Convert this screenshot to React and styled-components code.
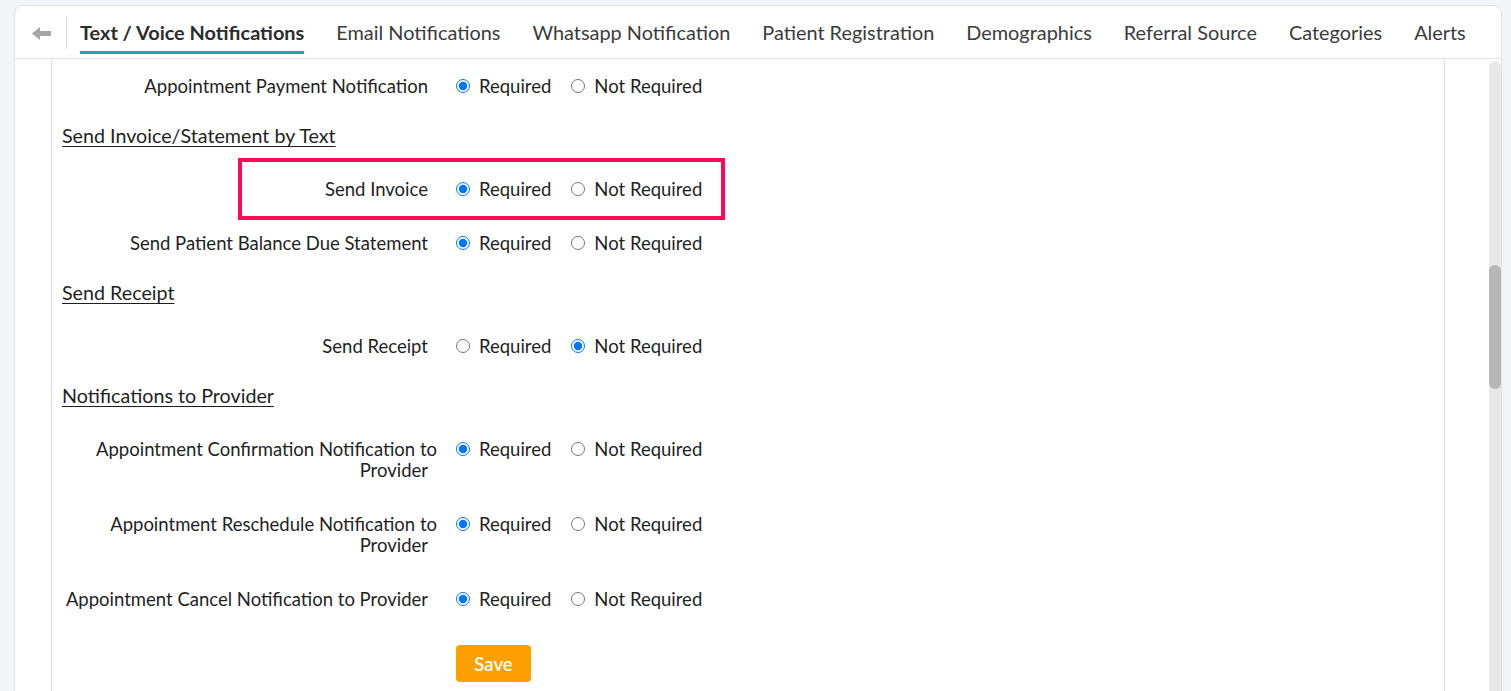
import React from "react";
import styled, { createGlobalStyle } from "styled-components";

const GlobalStyle = createGlobalStyle`
	html, body {
		margin: 0;
		height: 691px;
		overflow: hidden;
		background: #f3f4f8;
		font-family: Lato, "Open Sans", sans-serif;
	}
`;

const Page = styled.div`
		padding: 5px 9px 0 14px;
		height: 691px;
		box-sizing: border-box;
	`,
	Card = styled.div`
		background: #ffffff;
		border: 1px solid #e1e2e5;
		border-bottom: none;
		border-radius: 8px 8px 0 0;
		height: 100%;
		display: flex;
		flex-direction: column;
	`,
	TabBar = styled.div`
		display: flex;
		align-items: center;
		height: 52px;
		border-bottom: 1px solid #e3e4e7;
		flex-shrink: 0;
	`,
	BackBox = styled.div`
		display: flex;
		align-items: center;
		height: 32px;
		padding: 0 15px 0 17px;
		border-right: 1px solid #dcdcdc;
		margin-top: 2px;
	`,
	Tabs = styled.div`
		display: flex;
		align-self: flex-start;
		gap: 32px;
		margin-left: 13px;
	`,
	Tab = styled.div`
		display: flex;
		align-items: center;
		box-sizing: border-box;
		height: 48px;
		padding-top: 7px;
		border-bottom: 3px solid ${(p) => (p.$active ? "#1fa9a6" : "transparent")};
		font-size: 19.9px;
		font-weight: ${(p) => (p.$active ? 700 : 400)};
		color: ${(p) => (p.$active ? "#2c2c2c" : "#3b3b3b")};
		white-space: nowrap;
		cursor: pointer;
	`,
	Body = styled.div`
		flex: 1;
		display: flex;
		min-height: 0;
	`,
	Main = styled.div`
		flex: 1;
		display: flex;
		padding: 0 44px 0 36px;
	`,
	Panel = styled.div`
		flex: 1;
		border-left: 1px solid #dedfe2;
		border-right: 1px solid #dedfe2;
	`,
	Scrollbar = styled.div`
		width: 12px;
		margin-top: 2px;
		background: #e8e8e8;
		border-radius: 6px 6px 0 0;
	`,
	Thumb = styled.div`
		height: 124px;
		margin-top: ${(p) => p.$offset}px;
		background: #b6b6b6;
		border-radius: 6px;
	`,
	SectionTitle = styled.div`
		padding: 12px 0 16px 10px;
		font-size: 19.7px;
		line-height: 21px;
		color: #1f1f1f;
		text-decoration: underline;
		text-decoration-thickness: 1px;
		text-underline-offset: 3px;
	`,
	Row = styled.div`
		position: relative;
		display: flex;
		align-items: flex-start;
		padding: 17px 0 16px;
		font-size: 18.5px;
		line-height: 21px;
		color: #1f1f1f;

		${(p) =>
			p.$marked &&
			`
			&::after {
				content: "";
				position: absolute;
				top: -4px;
				bottom: -4px;
				left: 186px;
				width: 487px;
				box-sizing: border-box;
				border: 4px solid #ff0a54;
				pointer-events: none;
			}
		`}
	`,
	Label = styled.div`
		width: 385px;
		flex-shrink: 0;
		text-align: right;

		span {
			padding-right: 9px;
		}
	`,
	Options = styled.div`
		display: flex;
		gap: 20px;
		margin-left: 19px;
	`,
	Option = styled.label`
		display: inline-flex;
		align-items: center;
		gap: 9px;
		white-space: nowrap;

		input {
			width: 14px;
			height: 14px;
			margin: 0;
			position: relative;
			top: -1px;
		}
	`,
	SaveButton = styled.button`
		margin: 19px 0 0 404px;
		width: 75px;
		height: 37px;
		border: none;
		border-radius: 4px;
		background: #ffa000;
		color: #ffffff;
		font-family: Lato, sans-serif;
		font-size: 18.5px;
		font-weight: 600;
		cursor: pointer;
	`;

const BackArrow = () => (
	<svg width="19" height="13" viewBox="0 0 19 13">
		<polygon points="0,6.5 8,0 8,4 19,4 19,9 8,9 8,13" fill="#a6a6a6" />
	</svg>
);

const tabs = [
	"Text / Voice Notifications",
	"Email Notifications",
	"Whatsapp Notification",
	"Patient Registration",
	"Demographics",
	"Referral Source",
	"Categories",
	"Alerts",
];

const sections = [
	{
		rows: [{ label: "Appointment Payment Notification", value: "req" }],
	},
	{
		title: "Send Invoice/Statement by Text",
		rows: [
			{ label: "Send Invoice", value: "req", marked: true },
			{ label: "Send Patient Balance Due Statement", value: "req" },
		],
	},
	{
		title: "Send Receipt",
		rows: [{ label: "Send Receipt", value: "not" }],
	},
	{
		title: "Notifications to Provider",
		rows: [
			{ label: "Appointment Confirmation Notification to Provider", value: "req" },
			{ label: "Appointment Reschedule Notification to Provider", value: "req" },
			{ label: "Appointment Cancel Notification to Provider", value: "req" },
		],
	},
];

const SettingRow = ({ label, value, marked, name }) => {
	const [choice, setChoice] = React.useState(value);
	return (
		<Row $marked={marked}>
			<Label>
				<span>{label}</span>
			</Label>
			<Options>
				<Option>
					<input
						type="radio"
						name={name}
						checked={choice === "req"}
						onChange={() => setChoice("req")}
					/>
					Required
				</Option>
				<Option>
					<input
						type="radio"
						name={name}
						checked={choice === "not"}
						onChange={() => setChoice("not")}
					/>
					Not Required
				</Option>
			</Options>
		</Row>
	);
};

const App = () => {
	const [active, setActive] = React.useState(0);

	return (
		<>
			<GlobalStyle />
			<Page>
				<Card>
					<TabBar>
						<BackBox>
							<BackArrow />
						</BackBox>
						<Tabs>
							{tabs.map((t, i) => (
								<Tab key={t} $active={i === active} onClick={() => setActive(i)}>
									{t}
								</Tab>
							))}
						</Tabs>
					</TabBar>
					<Body>
						<Main>
							<Panel>
								{sections.map((s, si) => (
									<React.Fragment key={si}>
										{s.title && <SectionTitle>{s.title}</SectionTitle>}
										{s.rows.map((r, ri) => (
											<SettingRow key={r.label} name={`opt-${si}-${ri}`} {...r} />
										))}
									</React.Fragment>
								))}
								<SaveButton>Save</SaveButton>
							</Panel>
						</Main>
						<Scrollbar>
							<Thumb $offset={204} />
						</Scrollbar>
					</Body>
				</Card>
			</Page>
		</>
	);
};

export default App;
